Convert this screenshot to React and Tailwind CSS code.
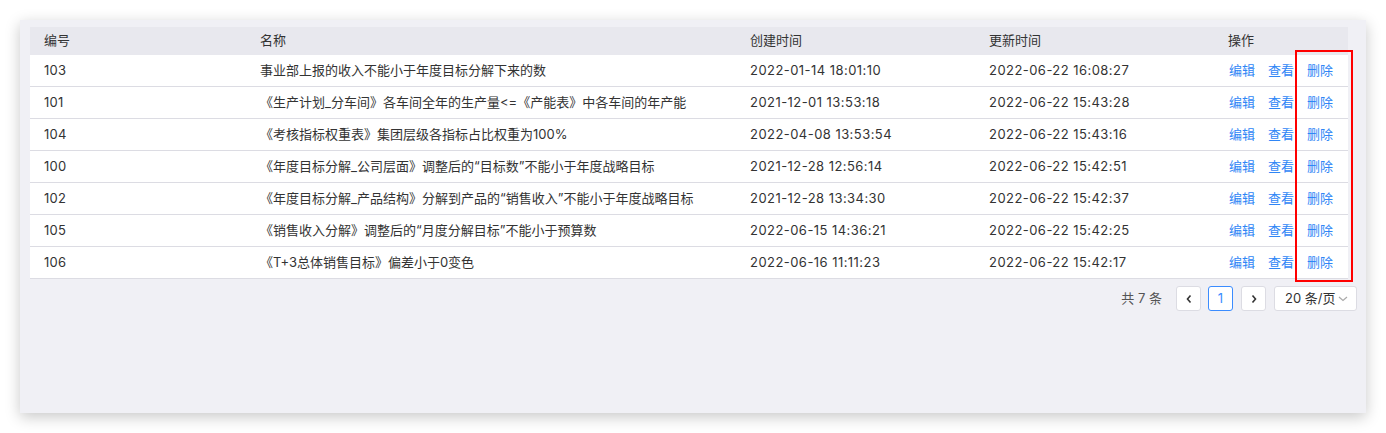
import React from "react";

const rows = [
  ["103", "事业部上报的收入不能小于年度目标分解下来的数", "2022-01-14 18:01:10", "2022-06-22 16:08:27"],
  ["101", "《生产计划_分车间》各车间全年的生产量<=《产能表》中各车间的年产能", "2021-12-01 13:53:18", "2022-06-22 15:43:28"],
  ["104", "《考核指标权重表》集团层级各指标占比权重为100%", "2022-04-08 13:53:54", "2022-06-22 15:43:16"],
  ["100", "《年度目标分解_公司层面》调整后的“目标数”不能小于年度战略目标", "2021-12-28 12:56:14", "2022-06-22 15:42:51"],
  ["102", "《年度目标分解_产品结构》分解到产品的“销售收入”不能小于年度战略目标", "2021-12-28 13:34:30", "2022-06-22 15:42:37"],
  ["105", "《销售收入分解》调整后的“月度分解目标”不能小于预算数", "2022-06-15 14:36:21", "2022-06-22 15:42:25"],
  ["106", "《T+3总体销售目标》偏差小于0变色", "2022-06-16 11:11:23", "2022-06-22 15:42:17"],
];

const font = { fontFamily: 'Inter, "Noto Sans CJK SC", sans-serif' };

export default function App() {
  return (
    <div className="w-[1386px] h-[433px] bg-white pt-[20px] pl-[20px]" style={font}>
      <div className="relative w-[1346px] h-[393px] bg-[#f0f0f5] shadow-[0_4px_14px_rgba(0,0,0,0.22)] pt-[7px] pl-[10px]">
        <div className="w-[1318px] text-[13px] text-[#333]">
          <div className="flex h-[28px] items-center bg-[#e8e8ee]">
            <div className="w-[216px] pl-[14px]">编号</div>
            <div className="w-[490px] pl-[14px]">名称</div>
            <div className="w-[239px] pl-[14px]">创建时间</div>
            <div className="w-[239px] pl-[14px]">更新时间</div>
            <div className="flex-1 pl-[14px]">操作</div>
          </div>
          {rows.map((r) => (
            <div key={r[0]} className="flex h-[32px] items-center bg-white border-b border-[#dcdce3]">
              <div className="w-[216px] pl-[14px] tracking-[0.3px]">{r[0]}</div>
              <div className="w-[490px] pl-[14px] whitespace-nowrap">{r[1]}</div>
              <div className="w-[239px] pl-[14px] tracking-[0.45px]">{r[2]}</div>
              <div className="w-[239px] pl-[14px] tracking-[0.45px]">{r[3]}</div>
              <div className="flex-1 pl-[15px] flex gap-[13px] text-[#2f86f6]">
                <span>编辑</span>
                <span>查看</span>
                <span>删除</span>
              </div>
            </div>
          ))}
        </div>
        <div className="flex items-center justify-end w-[1327px] mt-[7px] text-[13px] text-[#555]">
          <span className="mr-[14px]">共 7 条</span>
          <div className="w-[25px] h-[25px] bg-white border border-[#dcdce3] rounded-[3px] flex items-center justify-center text-[#333]">
            <svg width="8" height="10" viewBox="0 0 8 10"><path d="M5.5 1.5 L2.5 5 L5.5 8.5" fill="none" stroke="#333" strokeWidth="1.6" /></svg>
          </div>
          <div className="ml-[7px] w-[25px] h-[25px] bg-white border border-[#3b8cff] rounded-[3px] flex items-center justify-center text-[#3b8cff]">1</div>
          <div className="ml-[8px] w-[25px] h-[25px] bg-white border border-[#dcdce3] rounded-[3px] flex items-center justify-center">
            <svg width="8" height="10" viewBox="0 0 8 10"><path d="M2.5 1.5 L5.5 5 L2.5 8.5" fill="none" stroke="#333" strokeWidth="1.6" /></svg>
          </div>
          <div className="ml-[8px] w-[83px] h-[25px] bg-white border border-[#dcdce3] rounded-[3px] flex items-center pl-[10px] text-[#333]">
            <span>20 条/页</span>
            <svg className="ml-[3px]" width="10" height="6" viewBox="0 0 10 6"><path d="M1 1 L5 4.5 L9 1" fill="none" stroke="#aaa" strokeWidth="1.2" /></svg>
          </div>
        </div>
        <div className="absolute left-[1275px] top-[30px] w-[58px] h-[232px] border-2 border-[#ff0000]"></div>
      </div>
    </div>
  );
}
